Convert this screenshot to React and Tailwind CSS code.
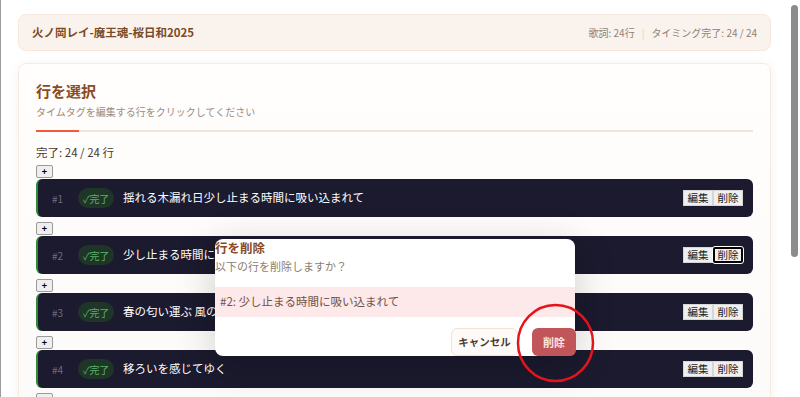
import React from 'react';

const FONT = { fontFamily: '"Noto Sans CJK JP", "Noto Sans", sans-serif' };

const LINES = [
  { no: 1, text: '揺れる木漏れ日少し止まる時間に吸い込まれて' },
  { no: 2, text: '少し止まる時間に吸い込まれて', focused: true },
  { no: 3, text: '春の匂い運ぶ 風の音に耳を澄ませて' },
  { no: 4, text: '移ろいを感じてゆく' },
  { no: 5, text: '' },
];

const PlusButton = () => (
  <button className="w-[17px] h-[13px] flex items-center justify-center bg-[#efefef] border border-[#9a9a9a] rounded-[2px] text-[9px] font-bold leading-none text-black">
    +
  </button>
);

const LineRow = ({ line }) => (
  <div className="h-[38px] flex items-center bg-[#1b1a2e] border-l-2 border-[#2e8b3a] rounded-md pl-[14px] pr-[10px]">
    <span className="w-[26px] text-[10px] text-[#6d6d80]">#{line.no}</span>
    <span className="h-[20px] px-[5px] flex items-center rounded-full bg-[#1f3527] text-[10px] tracking-[-0.3px] text-[#58b368]">✓完了</span>
    <span className="ml-[9px] text-[11.5px] text-white flex-1 truncate">{line.text}</span>
    <div className="flex">
      <button className="h-[16px] w-[30px] bg-[#efefef] border border-[#d6d6d6] text-[10.5px] leading-none text-[#222]">編集</button>
      <button className={`h-[16px] w-[30px] bg-[#efefef] text-[10.5px] leading-none text-[#222] ${line.focused ? 'border-2 border-black rounded-[2px] outline outline-1 outline-white' : 'border border-[#d6d6d6]'}`}>削除</button>
    </div>
  </div>
);

export default function App() {
  return (
    <div className="w-[800px] h-[397px] overflow-hidden bg-white flex relative" style={FONT}>
      {/* main column */}
      <div className="w-[790px] h-full border-l border-[#9c9c9c] pl-[17px] pr-[19px] pt-[14px]">
        {/* Header */}
        <div className="h-[37px] flex items-center justify-between px-[13px] bg-[#faf3ed] border border-[#f6e8dc] rounded-lg">
          <span className="text-[11.5px] font-bold text-[#7b4a26]">火ノ岡レイ-魔王魂-桜日和2025</span>
          <span className="text-[10px] text-[#8f8177]">
            歌詞: 24行<span className="mx-[7px] text-[#d8cfc8]">|</span>タイミング完了: 24 / 24
          </span>
        </div>

        {/* Main card */}
        <div className="mt-[12px] h-[400px] bg-gradient-to-b from-[#fffefd] to-[#fcfaf8] border border-[#f5ebe3] rounded-lg shadow-[0_2px_10px_rgba(180,140,110,0.12)] px-[17px] pt-[17px]">
          <h2 className="text-[15px] font-bold text-[#8a4b1f] leading-[20px]">行を選択</h2>
          <p className="text-[10px] text-[#9a8c82] mt-[4px] leading-[14px]">タイムタグを編集する行をクリックしてください</p>
          <div className="mt-[11px] h-[2px] bg-[#f3e4d6] relative">
            <div className="absolute left-0 top-0 h-[2px] w-[43px] bg-[#f25a3c]" />
          </div>

          <p className="mt-[12px] text-[11.5px] text-[#4a3a32] leading-[16px]">完了: 24 / 24 行</p>

          <div className="mt-[5px] flex flex-col">
            {LINES.map((line) => (
              <div key={line.no} className="flex flex-col gap-[1px] mb-[5px]">
                <PlusButton />
                {line.text && <LineRow line={line} />}
              </div>
            ))}
          </div>
        </div>
      </div>

      {/* scrollbar */}
      <div className="w-[10px] h-full pt-[5px] pl-[1px]">
        <div className="w-[7px] h-[252px] rounded-full bg-[#8c8c8c]" />
      </div>

      {/* Delete dialog */}
      <div className="absolute left-[215px] top-[239px] w-[360px] h-[117px] bg-white rounded-lg shadow-[0_8px_40px_rgba(0,0,0,0.18)] flex flex-col">
        <h3 className="text-[12.5px] font-bold text-[#8a4b1f] leading-[16px] mt-[1px]">行を削除</h3>
        <p className="text-[11px] text-[#8a7c72] leading-[16px] mt-[2px]">以下の行を削除しますか？</p>
        <div className="mt-[13px] h-[30px] flex items-center px-[5px] bg-[#fde8ea] text-[11.5px] text-[#6f5445]">
          #2: 少し止まる時間に吸い込まれて
        </div>
        <div className="mt-auto flex justify-end gap-[14px]">
          <button className="h-[28px] w-[67px] bg-[#fdfaf7] border border-[#efe3d9] rounded-md text-[10.5px] font-bold text-[#4a3a32]">キャンセル</button>
          <button className="h-[28px] w-[44px] bg-[#c0565a] rounded-md text-[11px] font-bold text-[#fbe4e4] -mr-[1px]">削除</button>
        </div>
      </div>

      {/* annotation circle */}
      <svg className="absolute left-[514px] top-[302px] pointer-events-none" width="84" height="82" viewBox="0 0 84 82">
        <ellipse cx="41.5" cy="41" rx="37.5" ry="38" fill="none" stroke="#e5141b" strokeWidth="2.5" />
      </svg>
    </div>
  );
}
